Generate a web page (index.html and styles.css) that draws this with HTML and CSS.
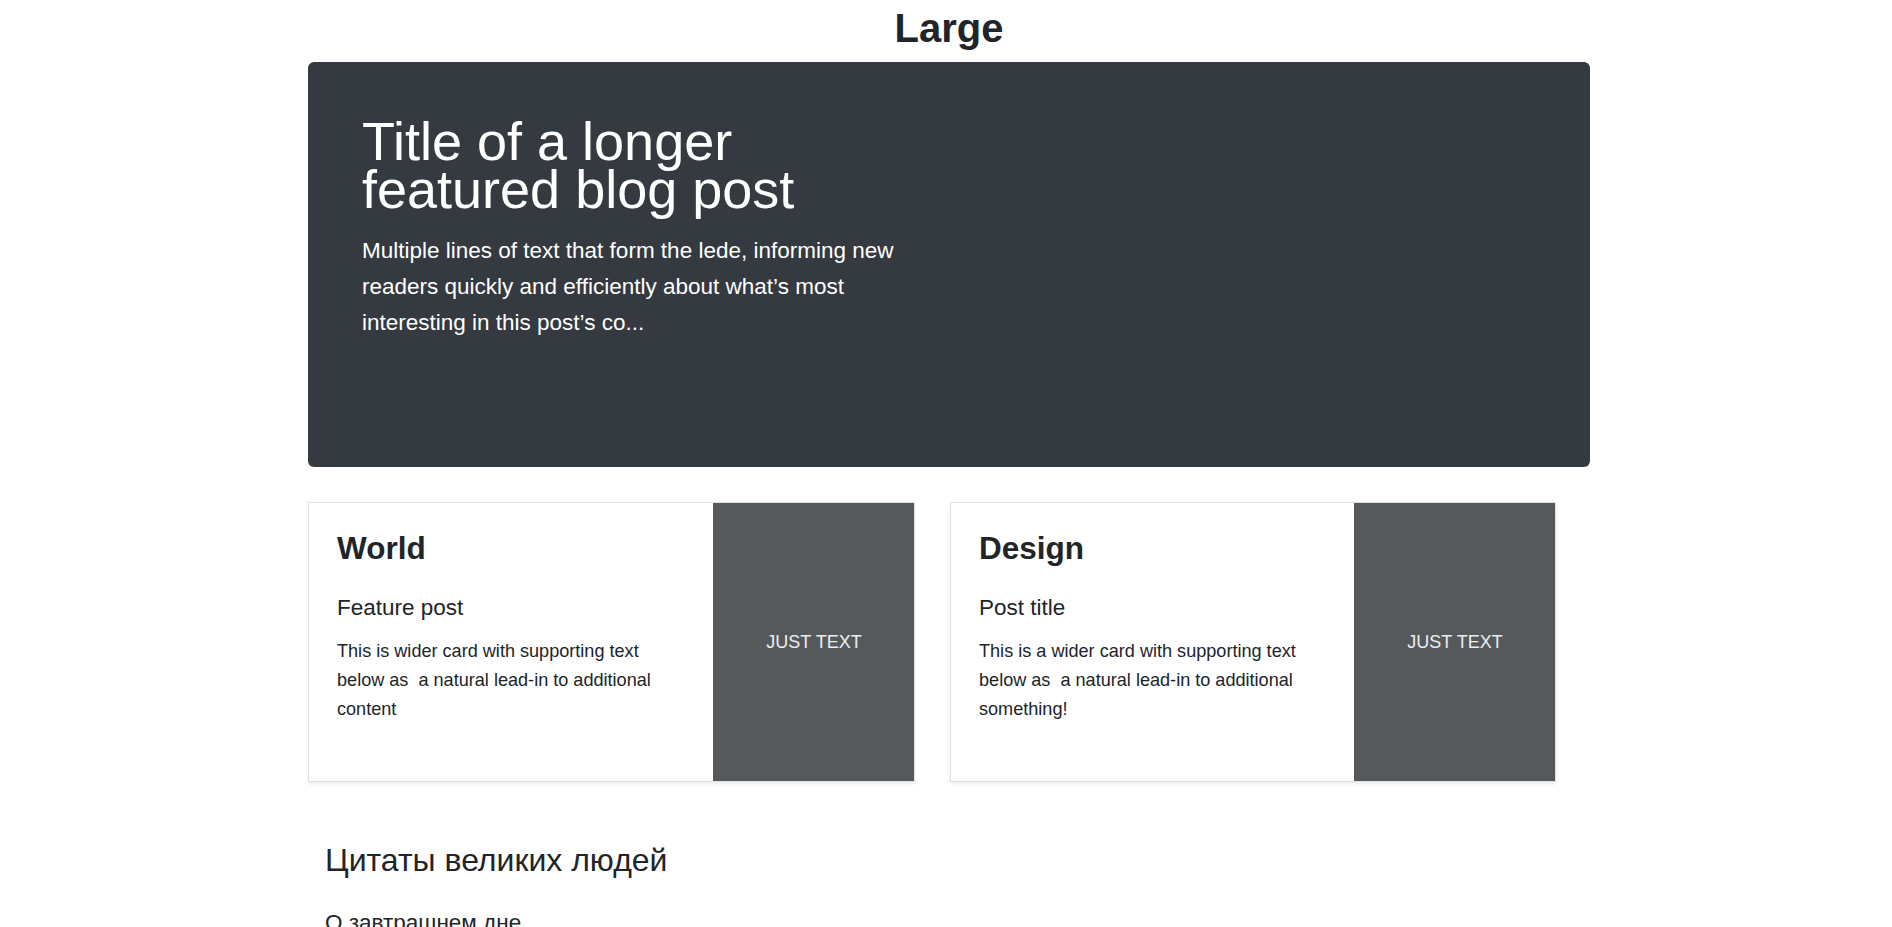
FILE: index.html
```html
<!DOCTYPE html>
<html lang="ru">
<head>
<meta charset="utf-8">
<title>Large</title>
<link rel="stylesheet" href="styles.css">
</head>
<body>
<main class="page">
  <h1 class="page-title">Large</h1>

  <section class="hero">
    <div class="hero-col">
      <h2 class="hero-title">Title of a longer featured blog post</h2>
      <p class="hero-lede">Multiple lines of text that form the lede, informing new readers quickly and efficiently about what’s most interesting in this post’s co...</p>
    </div>
  </section>

  <div class="cards">
    <article class="card">
      <div class="card-body">
        <h3 class="card-cat">World</h3>
        <h4 class="card-title">Feature post</h4>
        <p class="card-text">This is wider card with supporting text below as &nbsp;a natural lead-in to additional content</p>
      </div>
      <div class="card-thumb">JUST TEXT</div>
    </article>
    <article class="card">
      <div class="card-body">
        <h3 class="card-cat">Design</h3>
        <h4 class="card-title">Post title</h4>
        <p class="card-text">This is a wider card with supporting text below as &nbsp;a natural lead-in to additional something!</p>
      </div>
      <div class="card-thumb">JUST TEXT</div>
    </article>
  </div>

  <section class="quotes">
    <h2 class="quotes-title">Цитаты великих людей</h2>
    <h3 class="quote-head">О завтрашнем дне</h3>
  </section>
</main>
</body>
</html>
```

FILE: styles.css
```css
html, body {
  margin: 0;
  padding: 0;
  background: #ffffff;
}

body {
  padding-left: 6px;
  font-family: "Liberation Sans", Arial, "Noto Sans CJK SC", sans-serif;
  color: #212529;
  font-size: 18px;
}

.page {
  width: 1282px;
  margin: 0 auto;
}

.page-title {
  margin: 4px 0 10px;
  font-size: 40px;
  line-height: 48px;
  font-weight: 700;
  text-align: center;
  color: #212529;
}

.hero {
  box-sizing: border-box;
  height: 405px;
  padding: 55px 54px 0;
  background: #343a40;
  border-radius: 6px;
  color: #ffffff;
}

.hero-col {
  max-width: 561px;
}

.hero-title {
  margin: 0 0 19px;
  font-size: 54px;
  line-height: 48.3px;
  font-weight: 400;
}

.hero-lede {
  margin: 0;
  font-size: 22.5px;
  line-height: 36px;
}

.cards {
  display: grid;
  grid-template-columns: 1fr 1fr;
  margin-top: 35px;
}

.card {
  box-sizing: border-box;
  display: flex;
  width: 607px;
  height: 280px;
  border: 1px solid #dee2e6;
  background: #ffffff;
  box-shadow: 0 2px 4px rgba(0, 0, 0, 0.075);
  overflow: hidden;
}

.card + .card {
  width: 606px;
  margin-left: 1px;
}

.card-body {
  flex: 1;
  padding: 27px 27px 27px 28px;
}

.card-cat {
  margin: 0 0 26.5px;
  font-size: 31.5px;
  line-height: 37.8px;
  font-weight: 700;
}

.card-title {
  margin: 0 0 16px;
  font-size: 22.5px;
  line-height: 27px;
  font-weight: 400;
}

.card-text {
  margin: 0;
  font-size: 18.1px;
  line-height: 29px;
}

.card-thumb {
  flex: 0 0 202px;
  display: flex;
  align-items: center;
  justify-content: center;
  background: #55595c;
  color: #eceeef;
  font-size: 18px;
  margin-right: -1px;
}

.quotes {
  margin-top: 59px;
  padding-left: 17px;
}

.quotes-title {
  margin: 0 0 30px;
  font-size: 32px;
  line-height: 38.4px;
  font-weight: 400;
}

.quote-head {
  margin: 0;
  font-size: 22.5px;
  line-height: 27px;
  font-weight: 400;
}
```
